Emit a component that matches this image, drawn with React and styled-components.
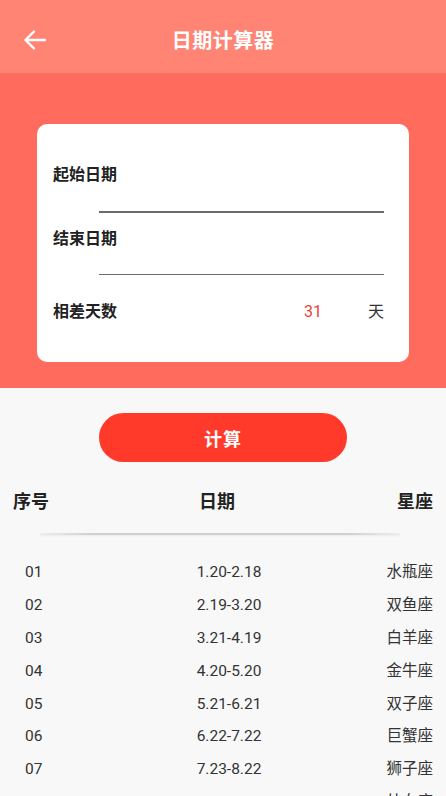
import React from "react";
import styled, { createGlobalStyle } from "styled-components";

const GlobalStyle = createGlobalStyle`
	html, body {
		margin: 0;
		padding: 0;
		background: #f8f8f8;
		font-family: Roboto, "Noto Sans CJK SC", sans-serif;
		overflow: hidden;
	}
`;

const Page = styled.div`
	width: 446px;
	min-height: 796px;
	background: #f8f8f8;
`;

const TopBar = styled.header`
	height: 73px;
	background: #ff8474;
	display: flex;
	align-items: center;
	justify-content: center;
	position: relative;
	padding-top: 6px;
	box-sizing: border-box;
`;

const BackButton = styled.div`
	position: absolute;
	left: 23px;
	top: 28px;
	width: 24px;
	height: 24px;
	display: flex;
`;

const Title = styled.h1`
	margin: 0;
	color: #fff;
	font-size: 20px;
	font-weight: 700;
	letter-spacing: 0.5px;
`;

const RedPanel = styled.section`
	background: #ff6b5d;
	padding: 51px 37px 26px;
`;

const Card = styled.div`
	background: #fff;
	border-radius: 10px;
	padding: 40px 25px 39px 16px;
`;

const Label = styled.div`
	font-size: 16px;
	font-weight: 700;
	line-height: 22px;
	color: #222;
	margin-top: ${({ gap }) => gap || 0}px;
`;

const Underline = styled.div`
	height: 1.5px;
	background: #6a6a6a;
	margin: ${({ top }) => top}px 0 0 46px;
`;

const ResultRow = styled.div`
	display: flex;
	align-items: center;
	margin-top: 26px;
	line-height: 22px;
`;

const ResultValue = styled.span`
	margin-left: auto;
	font-size: 16px;
	color: #e8453c;
`;

const Unit = styled.span`
	margin-left: 46px;
	font-size: 16px;
	color: #333;
`;

const ButtonWrap = styled.div`
	display: flex;
	justify-content: center;
	padding-top: 25px;
`;

const CalcButton = styled.button`
	width: 248px;
	height: 49px;
	border: none;
	border-radius: 25px;
	background: #ff3a2a;
	color: #fff;
	font-family: inherit;
	font-size: 18px;
	font-weight: 700;
	letter-spacing: 1px;
`;

const TableHead = styled.div`
	display: grid;
	grid-template-columns: 1fr auto 1fr;
	padding: 0 13px;
	margin-top: 27px;
	font-size: 18px;
	font-weight: 700;
	line-height: 26px;
	color: #222;
`;

const HeadCell = styled.span`
	text-align: ${({ align }) => align || "left"};
	margin-right: ${({ shift }) => shift || 0}px;
`;

const Divider = styled.div`
	height: 2px;
	margin: 18px 46px 0 40px;
	background: linear-gradient(to right, rgba(200, 200, 200, 0.2), #cfcfcf 15%, #cfcfcf 85%, rgba(200, 200, 200, 0.2));
	box-shadow: 0 1px 2px rgba(0, 0, 0, 0.06);
`;

const Rows = styled.div`
	margin-top: 21px;
`;

const Row = styled.div`
	display: grid;
	grid-template-columns: 1fr 1fr 1fr;
	padding: 0 13px 0 25px;
	height: 32.8px;
	align-items: center;
	font-size: 15.5px;
	line-height: 20px;
	color: #333;
`;

const Cell = styled.span`
	text-align: ${({ align }) => align || "left"};
`;

const signs = [
	["01", "1.20-2.18", "水瓶座"],
	["02", "2.19-3.20", "双鱼座"],
	["03", "3.21-4.19", "白羊座"],
	["04", "4.20-5.20", "金牛座"],
	["05", "5.21-6.21", "双子座"],
	["06", "6.22-7.22", "巨蟹座"],
	["07", "7.23-8.22", "狮子座"],
	["08", "8.23-9.22", "处女座"],
	["09", "9.23-10.23", "天秤座"],
	["10", "10.24-11.22", "天蝎座"],
	["11", "11.23-12.21", "射手座"],
	["12", "12.22-1.19", "摩羯座"],
];

const App = () => {
	return (
		<Page>
			<GlobalStyle />
			<TopBar>
				<BackButton>
					<svg width="24" height="24" viewBox="0 0 24 24" fill="none" stroke="#fff" strokeWidth="2.4" strokeLinecap="round" strokeLinejoin="round">
						<path d="M22 12H3" />
						<path d="M11 3.5L2.5 12L11 20.5" />
					</svg>
				</BackButton>
				<Title>日期计算器</Title>
			</TopBar>

			<RedPanel>
				<Card>
					<Label>起始日期</Label>
					<Underline top={25} />
					<Label gap={15}>结束日期</Label>
					<Underline top={24} />
					<ResultRow>
						<Label>相差天数</Label>
						<ResultValue>31</ResultValue>
						<Unit>天</Unit>
					</ResultRow>
				</Card>
			</RedPanel>

			<ButtonWrap>
				<CalcButton>计算</CalcButton>
			</ButtonWrap>

			<TableHead>
				<HeadCell>序号</HeadCell>
				<HeadCell align="center" shift={12}>日期</HeadCell>
				<HeadCell align="right">星座</HeadCell>
			</TableHead>
			<Divider />

			<Rows>
				{signs.map(([no, range, name]) => (
					<Row key={no}>
						<Cell>{no}</Cell>
						<Cell align="center">{range}</Cell>
						<Cell align="right">{name}</Cell>
					</Row>
				))}
			</Rows>
		</Page>
	);
};

export default App;
